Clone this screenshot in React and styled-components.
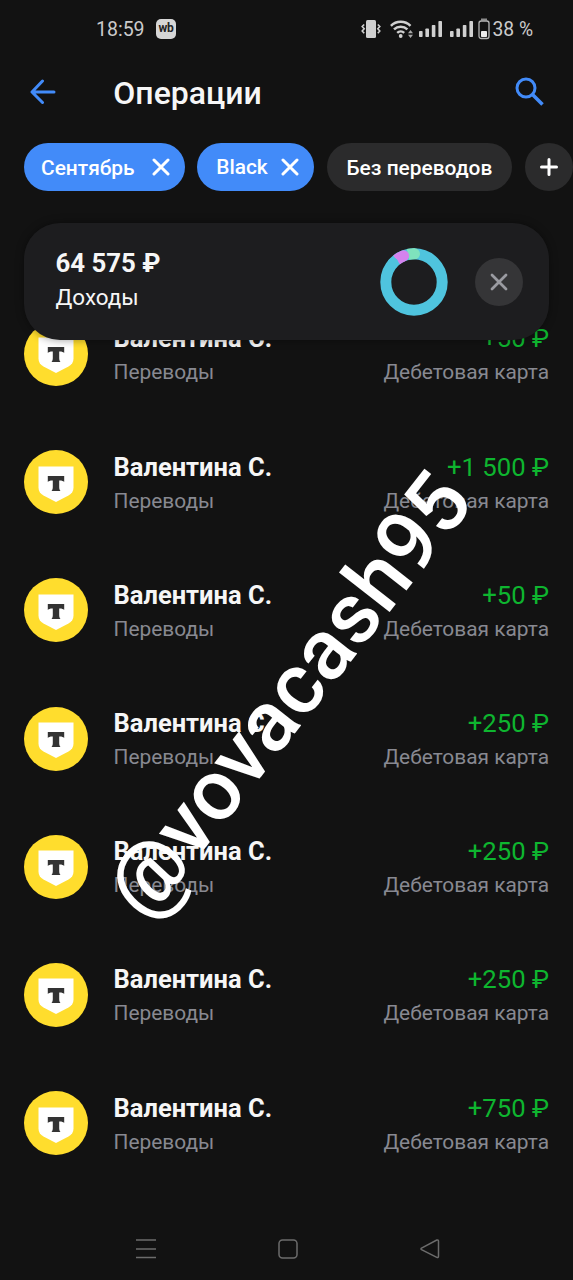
import React from "react";
import styled, { createGlobalStyle } from "styled-components";

const operations = [
  { id: 1, name: "Валентина С.", amount: "+50 ₽" },
  { id: 2, name: "Валентина С.", amount: "+1 500 ₽" },
  { id: 3, name: "Валентина С.", amount: "+50 ₽" },
  { id: 4, name: "Валентина С.", amount: "+250 ₽" },
  { id: 5, name: "Валентина С.", amount: "+250 ₽" },
  { id: 6, name: "Валентина С.", amount: "+250 ₽" },
  { id: 7, name: "Валентина С.", amount: "+750 ₽" },
];

function Cross({ size = 18, width = 3, color = "#fff" }) {
  return (
    <svg width={size} height={size} viewBox="0 0 18 18">
      <path
        d="M2 2L16 16M16 2L2 16"
        stroke={color}
        strokeWidth={width}
        strokeLinecap="round"
      />
    </svg>
  );
}

function Signal() {
  return (
    <svg width="24" height="18" viewBox="0 0 24 18" fill="#d0d0d0">
      <rect x="0" y="11" width="3.6" height="6" rx="0.8" />
      <rect x="6.4" y="8.4" width="3.6" height="8.6" rx="0.8" />
      <rect x="12.8" y="5" width="3.6" height="12" rx="0.8" />
      <rect x="19.4" y="1" width="3.6" height="16" rx="0.8" />
    </svg>
  );
}

function StatusIcons() {
  return (
    <StatusRight>
      <svg width="20" height="20" viewBox="0 0 20 20">
        <rect x="5" y="1" width="10" height="18" rx="1.5" fill="#d0d0d0" />
        <path
          d="M3.200 5.500L1.200 7.500L3.200 9.800L1.200 12L3.200 14.200M16.800 5.500L18.800 7.500L16.800 9.800L18.800 12L16.800 14.200"
          fill="none"
          stroke="#d0d0d0"
          strokeWidth="1.6"
        />
      </svg>
      <WifiSlot>
        <svg width="24" height="20" viewBox="0 0 24 20">
          <g fill="none" stroke="#d0d0d0" strokeWidth="2.5">
            <path d="M0.900 6.800A14 14 0 0 1 20.500 6.800" />
            <path d="M4 10.400A9.600 9.600 0 0 1 17.400 10.400" />
            <path d="M7.200 13.900A5.200 5.200 0 0 1 14.200 13.900" />
          </g>
          <circle cx="10.700" cy="17" r="1.900" fill="#d0d0d0" />
          <path
            d="M20.500 11L23 14.200H18ZM20.500 19L23 15.800H18Z"
            fill="#a8a8a8"
          />
        </svg>
      </WifiSlot>
      <SignalSlot>
        <Signal />
        <Signal />
      </SignalSlot>
      <svg width="12" height="22" viewBox="0 0 12 22">
        <rect x="3" y="0.500" width="6" height="2" fill="#8c8c8c" />
        <rect
          x="1"
          y="3"
          width="10"
          height="17.500"
          rx="2.200"
          fill="none"
          stroke="#b4b4b4"
          strokeWidth="1.300"
        />
        <rect x="3" y="13" width="6" height="6" rx="0.800" fill="#ececec" />
      </svg>
      <Percent>38 %</Percent>
    </StatusRight>
  );
}

function Donut() {
  return (
    <svg width="68" height="68" viewBox="0 0 68 68">
      <g fill="none" strokeWidth="11">
        <circle cx="34" cy="34" r="28.200" stroke="#4fc4de" />
        <path d="M28 6.450A28.200 28.200 0 0 1 34.500 5.800" stroke="#7fe3bd" />
        <circle cx="34.500" cy="5.800" r="5.500" fill="#7fe3bd" stroke="none" />
        <path d="M16.600 11.800A28.200 28.200 0 0 1 23.600 7.800" stroke="#d583ee" />
        <circle cx="23.600" cy="7.800" r="5.500" fill="#d583ee" stroke="none" />
        <circle cx="13" cy="15.200" r="5.500" fill="#4fc4de" stroke="none" />
      </g>
    </svg>
  );
}

function BankLogo() {
  return (
    <Avatar>
      <svg width="36" height="36" viewBox="0 0 36 36">
        <path
          d="M0.500 0.500H35.500V21.500C35.500 25.200 33.700 27.600 30.500 29.500L18 36L5.500 29.500C2.300 27.600 0.500 25.200 0.500 21.500Z"
          fill="#fff"
        />
        <path
          d="M9.800 10H26.200V16C25.200 15 23.800 14.500 22 14.500H21.200V21C21.200 22.800 21.600 24.100 22.500 25H13.500C14.400 24.100 14.800 22.800 14.800 21V14.500H14C12.200 14.500 10.800 15 9.800 16Z"
          fill="#333"
        />
      </svg>
    </Avatar>
  );
}

function App() {
  return (
    <>
      <GlobalStyle />
      <Screen>
        <StatusBar>
          <Time>18:59</Time>
          <WbBadge>wb</WbBadge>
          <StatusIcons />
        </StatusBar>

        <Header>
          <svg width="26" height="26" viewBox="0 0 26 26">
            <path
              d="M24 13H2.500M12.500 2L2 13L12.500 23.500"
              fill="none"
              stroke="#428bf9"
              strokeWidth="3"
              strokeLinecap="round"
              strokeLinejoin="round"
            />
          </svg>
          <Title>Операции</Title>
          <svg width="30" height="30" viewBox="0 0 30 30">
            <g fill="none" stroke="#428bf9" strokeWidth="3">
              <circle cx="11" cy="11" r="9" />
              <path d="M17.500 17.500L27.500 27.500" strokeWidth="3.600" />
            </g>
          </svg>
        </Header>

        <Filters>
          <Chip $active $width={161}>
            <ChipText>Сентябрь</ChipText>
            <Cross />
          </Chip>
          <Chip $active $width={117}>
            <BrandText>Black</BrandText>
            <Cross />
          </Chip>
          <Chip $width={185}>
            <ChipText>Без переводов</ChipText>
          </Chip>
          <AddButton>
            <svg width="18" height="18" viewBox="0 0 18 18">
              <path
                d="M9 1.500V16.500M1.500 9H16.500"
                stroke="#fff"
                strokeWidth="3"
                strokeLinecap="round"
              />
            </svg>
          </AddButton>
        </Filters>

        <Summary>
          <SummaryText>
            <Total>64 575 ₽</Total>
            <Caption>Доходы</Caption>
          </SummaryText>
          <Donut />
          <CloseButton>
            <Cross color="#9a9ba1" width={2.8} />
          </CloseButton>
        </Summary>

        <List>
          {operations.map((item) => (
            <Row key={item.id}>
              <BankLogo />
              <Info>
                <Name>{item.name}</Name>
                <Detail>Переводы</Detail>
              </Info>
              <Info $right>
                <Amount>{item.amount}</Amount>
                <Detail>Дебетовая карта</Detail>
              </Info>
            </Row>
          ))}
        </List>

        <NavBar>
          <svg width="20" height="20" viewBox="0 0 20 20">
            <path d="M0 1H20M0 10H20M0 18.500H20" stroke="#6c6c6c" strokeWidth="1.500" />
          </svg>
          <svg width="20" height="20" viewBox="0 0 20 20">
            <rect x="1" y="1" width="18" height="18" rx="3.500" fill="none" stroke="#6c6c6c" strokeWidth="1.500" />
          </svg>
          <svg width="20" height="20" viewBox="0 0 20 20">
            <path
              d="M1.500 9.200L16.800 1Q18.500 0.500 18.500 2.200V17.300Q18.500 19 16.800 18.400L1.500 10.600Q0.500 9.900 1.500 9.200Z"
              fill="none"
              stroke="#6c6c6c"
              strokeWidth="1.500"
            />
          </svg>
        </NavBar>
        <Watermark>@vovacash95</Watermark>
      </Screen>
    </>
  );
}

const GlobalStyle = createGlobalStyle`
  * {
    box-sizing: border-box;
  }
  body {
    margin: 0;
    background: #121212;
    font-family: Roboto, "Noto Sans", sans-serif;
  }
  svg {
    display: block;
    flex-shrink: 0;
  }
`;

const Screen = styled.div`
  position: relative;
  width: 573px;
  height: 1280px;
  display: flex;
  flex-direction: column;
  overflow: hidden;
  background: #121212;
  color: #f6f6f6;
`;

const StatusBar = styled.div`
  height: 60px;
  display: flex;
  align-items: center;
  padding: 0 39.5px 2px 96px;
  color: #cbcbcb;
`;

const Time = styled.div`
  width: 60px;
  font-size: 19.5px;
`;

const WbBadge = styled.div`
  width: 20px;
  height: 20px;
  border-radius: 5px;
  background: #d6d6d6;
  color: #222;
  font-size: 12px;
  font-weight: 700;
  line-height: 18px;
  text-align: center;
  letter-spacing: -0.3px;
`;

const StatusRight = styled.div`
  display: flex;
  align-items: center;
  margin-left: auto;
`;

const WifiSlot = styled.div`
  margin-left: 9.5px;
`;

const SignalSlot = styled.div`
  display: flex;
  gap: 6.5px;
  margin: 0 4px 0 5px;
`;

const Percent = styled.div`
  width: 41px;
  margin-left: 3px;
  font-size: 19.3px;
  white-space: nowrap;
`;

const Header = styled.div`
  height: 66px;
  display: flex;
  align-items: center;
  padding: 0 28px 2px 30px;
`;

const Title = styled.div`
  flex: 1;
  margin-left: 57.3px;
  padding-top: 2px;
  font-size: 32px;
  font-weight: 500;
`;

const Filters = styled.div`
  display: flex;
  gap: 12.7px;
  margin: 17.4px 0 0 23.5px;
`;

const Chip = styled.div`
  width: ${({ $width }) => $width}px;
  height: 48px;
  display: flex;
  flex-shrink: 0;
  align-items: center;
  justify-content: ${({ $active }) => ($active ? "space-between" : "center")};
  padding: ${({ $active }) => ($active ? "0 15px 0 17.5px" : "0")};
  border-radius: 24px;
  background: ${({ $active }) => ($active ? "#428bf9" : "#2b2b2c")};
  color: #fff;
  font-size: 20.9px;
  font-weight: 500;
`;

const ChipText = styled.span`
  padding-top: 2px;
  white-space: nowrap;
`;

const BrandText = styled.span`
  padding-left: 1.5px;
`;

const AddButton = styled.div`
  width: 48px;
  height: 48px;
  display: flex;
  flex-shrink: 0;
  align-items: center;
  justify-content: center;
  border-radius: 50%;
  background: #2b2b2c;
`;

const Summary = styled.div`
  z-index: 1;
  height: 117px;
  display: flex;
  flex-shrink: 0;
  align-items: center;
  margin: 32.1px 24px 0 23.5px;
  padding: 0 26px 0 32px;
  border-radius: 36px;
  background: #1d1d1f;
  box-shadow: 0 0 8px rgba(0, 0, 0, 0.4);
`;

const SummaryText = styled.div`
  flex: 1;
  padding-bottom: 2px;
`;

const Total = styled.div`
  font-size: 25.8px;
  font-weight: 700;
  line-height: 34px;
`;

const Caption = styled.div`
  font-size: 22.4px;
  line-height: 35px;
`;

const CloseButton = styled.div`
  width: 48px;
  height: 48px;
  display: flex;
  align-items: center;
  justify-content: center;
  margin-left: 27px;
  border-radius: 50%;
  background: #353537;
`;

const List = styled.div`
  flex: 1;
  margin: -50.6px 24px 0 23.5px;
`;

const Row = styled.div`
  height: 128.2px;
  display: flex;
  align-items: center;
`;

const Avatar = styled.div`
  width: 64px;
  height: 64px;
  display: flex;
  align-items: center;
  justify-content: center;
  padding-top: 3px;
  border-radius: 50%;
  background: #ffdd2d;
`;

const Info = styled.div`
  margin-left: ${({ $right }) => ($right ? "auto" : "26px")};
  padding-top: 3px;
  text-align: ${({ $right }) => ($right ? "right" : "left")};
`;

const Name = styled.div`
  font-size: 25.5px;
  font-weight: 700;
  line-height: 34px;
`;

const Amount = styled.div`
  color: #0eb52f;
  font-size: 25.7px;
  line-height: 34px;
`;

const Detail = styled.div`
  color: #888991;
  font-size: 20.9px;
  line-height: 34px;
`;

const NavBar = styled.div`
  height: 62px;
  display: flex;
  flex-shrink: 0;
  align-items: center;
  justify-content: space-between;
  padding: 0 133px 0 136px;
`;

const Watermark = styled.div`
  position: absolute;
  z-index: 2;
  top: 694.5px;
  left: 289px;
  color: #fff;
  font-size: 85.6px;
  font-weight: 500;
  line-height: 1;
  transform: translate(-50%, -50%) rotate(-52deg);
`;

export default App;
